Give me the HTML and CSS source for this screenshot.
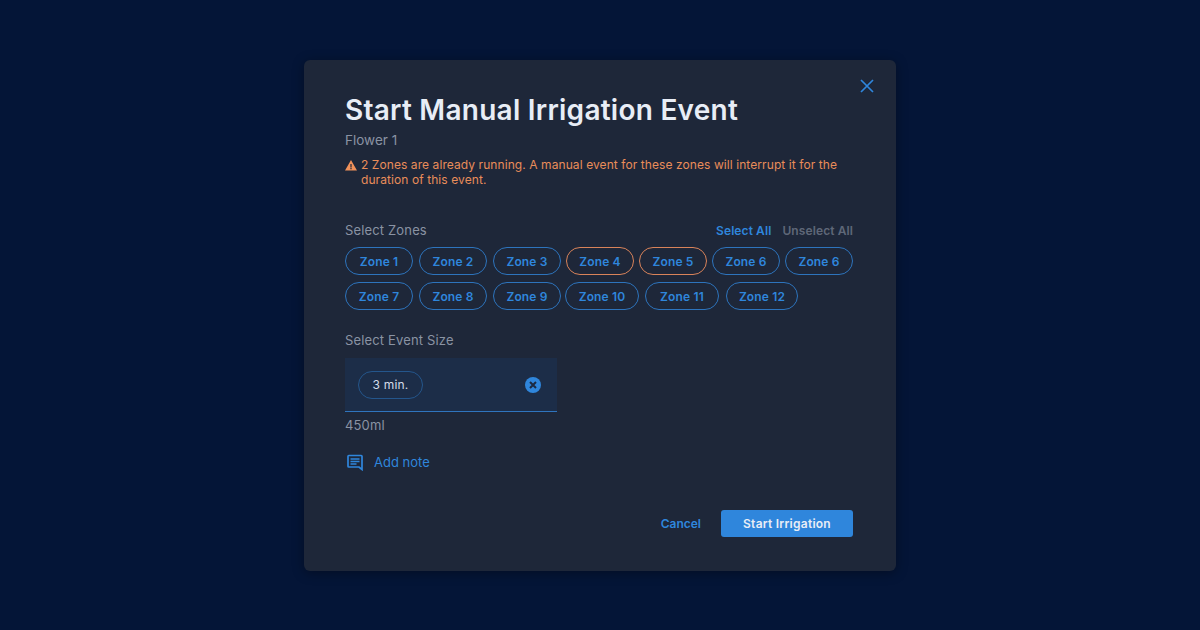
FILE: index.html
```html
<!DOCTYPE html>
<html lang="en">
<head>
  <meta charset="UTF-8" />
  <title>Start Manual Irrigation Event</title>
  <link rel="stylesheet" href="styles.css">
</head>
<body>
  <div class="modal">
    <button class="close" aria-label="Close">
      <svg width="14" height="14" viewBox="0 0 14 14"><path d="M1 1l12 12M13 1L1 13" stroke="#2f86dc" stroke-width="1.7" fill="none"/></svg>
    </button>

    <h1>Start Manual Irrigation Event</h1>
    <p class="room">Flower 1</p>
    <div class="warning">
      <svg class="warn-icon" width="12" height="11" viewBox="0 0 12 11"><path fill-rule="evenodd" d="M6 0l6 10.6H0zM5.400 4v3.400h1.200V4zM5.400 8.100v1.200h1.200V8.100z" fill="#f0915a"/></svg>
      <span>2 Zones are already running. A manual event for these zones will interrupt it for the duration of this event.</span>
    </div>

    <div class="zones-head">
      <span class="label">Select Zones</span>
      <div class="zone-links">
        <a class="link-on">Select All</a>
        <a class="link-off">Unselect All</a>
      </div>
    </div>
    <div class="chips chips-first">
      <span class="chip">Zone 1</span>
      <span class="chip">Zone 2</span>
      <span class="chip">Zone 3</span>
      <span class="chip running">Zone 4</span>
      <span class="chip running">Zone 5</span>
      <span class="chip">Zone 6</span>
      <span class="chip">Zone 6</span>
    </div>
    <div class="chips chips-second">
      <span class="chip">Zone 7</span>
      <span class="chip">Zone 8</span>
      <span class="chip">Zone 9</span>
      <span class="chip wide">Zone 10</span>
      <span class="chip wide">Zone 11</span>
      <span class="chip last">Zone 12</span>
    </div>

    <div class="label size-label">Select Event Size</div>
    <div class="size-field">
      <span class="size-chip">3 min.</span>
      <svg width="16" height="16" viewBox="0 0 16 16"><circle cx="8" cy="8" r="8" fill="#2f86dc"/><path d="M5 5l6 6M11 5l-6 6" stroke="#1c2a42" stroke-width="2" fill="none"/></svg>
    </div>
    <div class="volume">450ml</div>

    <a class="add-note">
      <svg width="18" height="18" viewBox="0 0 18 18"><path d="M3.800 2.500h12.400a.8.8 0 0 1 .8.8v13.200l-3-2.500H3.800a.8.8 0 0 1-.8-.8V3.300a.8.8 0 0 1 .8-.8z" fill="none" stroke="#2f86dc" stroke-width="1.700"/><path d="M5.500 6h9M5.500 8.500h9M5.500 11h6" stroke="#2f86dc" stroke-width="1.500"/></svg>
      <span>Add note</span>
    </a>

    <div class="actions">
      <a class="cancel">Cancel</a>
      <button class="primary">Start Irrigation</button>
    </div>
  </div>
</body>
</html>
```

FILE: styles.css
```css
:root {
  --blue: #2f86dc;
  --orange: #d9835a;
  --muted: #8a93a3;
}

* {
  box-sizing: border-box;
}

html, body {
  height: 100%;
}

body {
  margin: 0;
  background-color: #041537;
  font-family: "Inter", sans-serif;
  color: var(--muted);
  padding-top: 60px;
}

.modal {
  position: relative;
  width: 592px;
  height: 511px;
  margin: 0 auto;
  padding: 30px 43px 0 41px;
  background-color: #1e2739;
  border-radius: 6px;
  box-shadow: 0 2px 12px rgba(0, 0, 0, 0.35);
}

.close {
  position: absolute;
  top: 19px;
  right: 22px;
  padding: 0;
  border: 0;
  background: none;
  line-height: 0;
}

h1 {
  margin: 0;
  font-size: 28px;
  line-height: 40px;
  font-weight: 600;
  letter-spacing: 0.25px;
  color: #e8edf6;
}

.room {
  margin: 0;
  font-size: 13.500px;
  line-height: 20px;
}

.warning {
  position: relative;
  margin-top: 7px;
  padding-left: 16px;
  font-size: 12px;
  line-height: 15px;
  letter-spacing: 0.08px;
  color: #e98d5a;
}

.warn-icon {
  position: absolute;
  left: 0;
  top: 3px;
}

.zones-head {
  display: flex;
  justify-content: space-between;
  align-items: center;
  margin-top: 33px;
  height: 20px;
}

.label {
  font-size: 13px;
  line-height: 20px;
  letter-spacing: 0.15px;
}

.zone-links {
  display: flex;
  gap: 11px;
  font-size: 12px;
  font-weight: 600;
  letter-spacing: 0.1px;
}

.link-on {
  color: var(--blue);
}

.link-off {
  color: #5f6778;
}

.chips {
  display: flex;
  margin-top: 7px;
}

.chips-first {
  gap: 5px;
}

.chips-first .chip:nth-child(2),
.chips-first .chip:nth-child(3) {
  margin-left: 1px;
}

.chips-second {
  gap: 6px;
}

.chip {
  display: flex;
  flex: none;
  align-items: center;
  justify-content: center;
  width: 68px;
  height: 28px;
  border: 1px solid #2d74bd;
  border-radius: 14px;
  font-size: 12px;
  font-weight: 600;
  letter-spacing: 0.15px;
  color: var(--blue);
}

.chip.wide {
  width: 74px;
}

.chip.wide:nth-child(4) {
  margin-left: -2px;
}

.chip.last {
  width: 72px;
  margin-left: 1px;
}

.chip.running {
  border-color: var(--orange);
}

.size-label {
  margin-top: 20px;
}

.size-field {
  display: flex;
  align-items: center;
  justify-content: space-between;
  width: 212px;
  height: 54px;
  margin-top: 8px;
  padding: 0 16px 0 13px;
  background-color: #1c2d48;
  border-bottom: 1px solid #2f74bd;
}

.size-chip {
  display: flex;
  align-items: center;
  justify-content: center;
  width: 65px;
  height: 28px;
  border: 1px solid #24568c;
  border-radius: 14px;
  font-size: 12px;
  letter-spacing: 0.2px;
  color: #d5dce8;
}

.volume {
  margin-top: 3px;
  font-size: 13px;
  line-height: 20px;
  letter-spacing: 0.15px;
}

.add-note {
  display: flex;
  align-items: center;
  gap: 11px;
  margin-top: 18px;
  font-size: 13px;
  color: var(--blue);
}

.actions {
  position: absolute;
  right: 43px;
  bottom: 34px;
  display: flex;
  align-items: center;
  gap: 20px;
}

.cancel {
  font-size: 12px;
  font-weight: 600;
  color: var(--blue);
}

.primary {
  width: 132px;
  height: 27px;
  border: 0;
  border-radius: 3px;
  background-color: var(--blue);
  font-family: inherit;
  font-size: 12px;
  font-weight: 600;
  letter-spacing: 0.25px;
  color: #e8edf6;
}
```
